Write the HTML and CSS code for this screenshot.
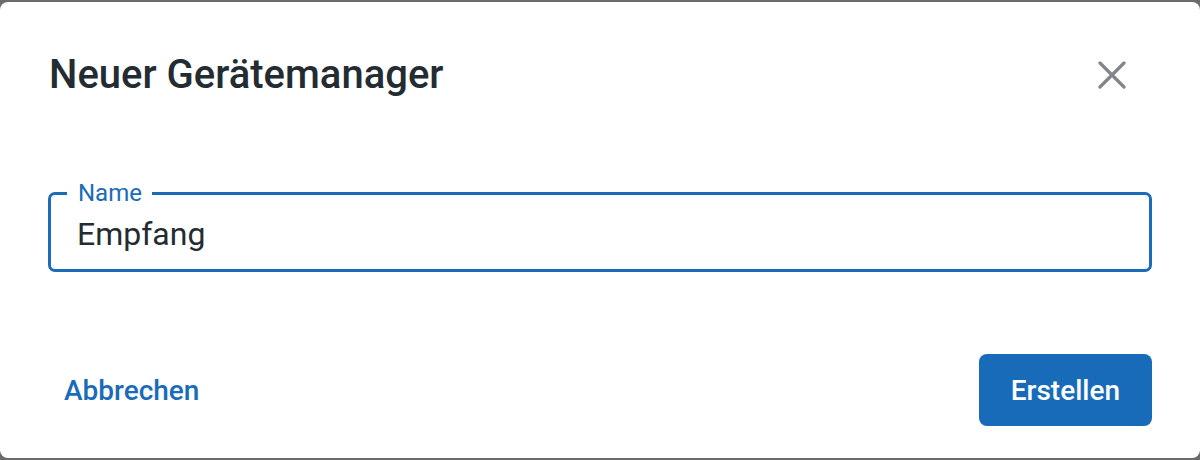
FILE: index.html
```html
<!DOCTYPE html>
<html lang="de">
<head>
<meta charset="utf-8">
<title>Neuer Gerätemanager</title>
<link rel="stylesheet" href="styles.css">
</head>
<body>
<div class="dialog">
  <div class="header">
    <h2 class="title">Neuer Gerätemanager</h2>
    <button class="close" aria-label="Schließen">
      <svg width="28" height="28" viewBox="0 0 28 28"><path d="M2 2 L26 26 M26 2 L2 26" stroke="#80868b" stroke-width="3.2" stroke-linecap="round" fill="none"/></svg>
    </button>
  </div>
  <div class="body">
    <fieldset class="field">
      <legend class="label">Name</legend>
      <div class="value">Empfang</div>
    </fieldset>
  </div>
  <div class="footer">
    <button class="btn btn-text">Abbrechen</button>
    <button class="btn btn-primary">Erstellen</button>
  </div>
</div>
</body>
</html>
```
FILE: styles.css
```css
html, body {
  margin: 0;
  padding: 0;
}
body {
  background: #6b6b6b;
  font-family: Roboto, "Noto Sans", sans-serif;
  width: 1200px;
  height: 460px;
  overflow: hidden;
}
.dialog {
  margin-top: 2px;
  height: 456px;
  background: #ffffff;
  border-radius: 8px;
  box-sizing: border-box;
  padding: 0 48px;
  display: flex;
  flex-direction: column;
}
.header {
  display: flex;
  justify-content: space-between;
  align-items: center;
  padding-top: 53px;
  height: 40px;
}
.title {
  margin: 0 0 0 1px;
  font-size: 40px;
  line-height: 40px;
  font-weight: 500;
  color: #232c32;
}
.close {
  background: none;
  border: 0;
  padding: 0;
  margin-right: 26px;
  width: 28px;
  height: 28px;
  display: flex;
}
.body {
  padding-top: 88px;
}
.field {
  margin: 0;
  height: 89px;
  box-sizing: border-box;
  border: 3px solid #1a6bb8;
  border-radius: 7px;
  padding: 12px 26px 0;
}
.label {
  padding: 0 10px 0 11px;
  margin-left: -10px;
  font-size: 24px;
  line-height: 20px;
  color: #1a6bb8;
}
.value {
  font-size: 32px;
  line-height: 38px;
  color: #232c32;
}
.footer {
  margin-top: auto;
  padding-bottom: 32px;
  display: flex;
  justify-content: space-between;
  align-items: center;
}
.btn {
  font-family: Roboto, "Noto Sans", sans-serif;
  font-size: 28px;
  font-weight: 500;
  height: 72px;
  border: 0;
  border-radius: 8px;
  cursor: pointer;
}
.btn-text {
  background: transparent;
  color: #1a6bb8;
  padding: 0 16px;
}
.btn-primary {
  background: #176bb8;
  color: #ffffff;
  padding: 0 32px;
}
```
